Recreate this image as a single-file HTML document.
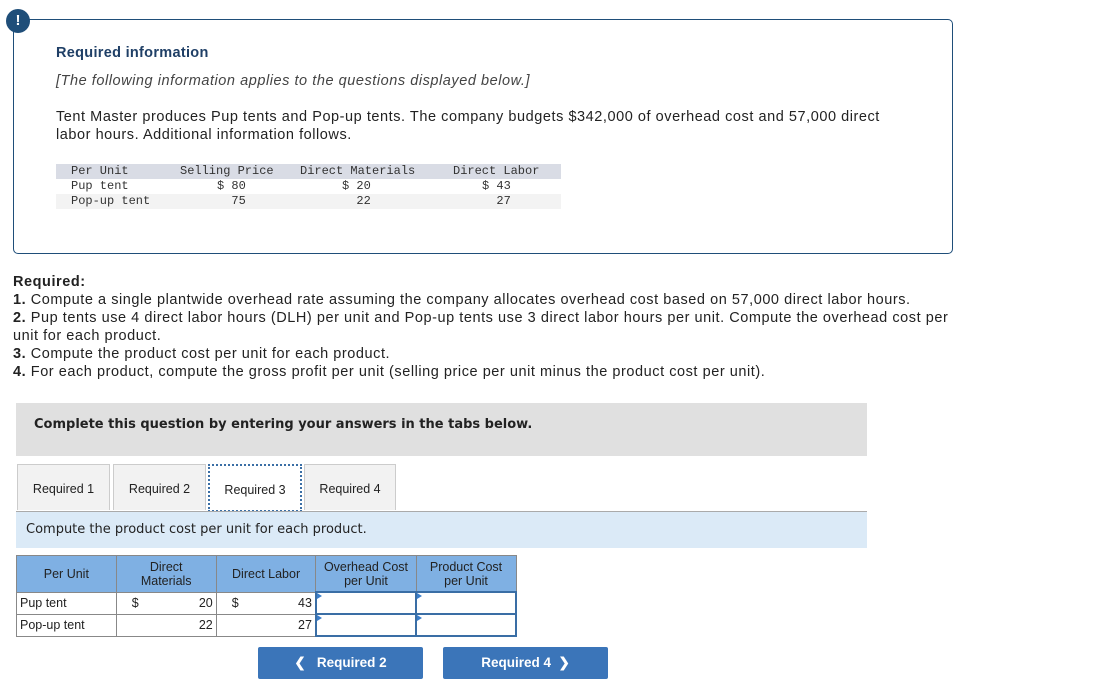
<!DOCTYPE html>
<html><head><meta charset="utf-8"><style>
body{margin:0;width:1094px;height:685px;background:#fff;position:relative;font-family:"Liberation Sans",sans-serif;color:#222;overflow:hidden}
.a{position:absolute}
.box{left:13px;top:19px;width:938px;height:233px;border:1px solid #1f4e79;border-radius:5px}
.ic{left:6px;top:9px;width:24px;height:24px;border-radius:50%;background:#1f4e79;color:#fff;font-weight:bold;font-size:15px;text-align:center;line-height:24px}
.mono{font-family:"Liberation Mono",monospace;font-size:12px;color:#333}
.t{font-size:14.5px;line-height:18px;color:#222;letter-spacing:0.55px}
.tab{top:464px;height:46px;border:1px solid #ccc;border-bottom:none;background:#f2f2f2;font-size:12.5px;text-align:center;line-height:48px;box-sizing:border-box}
table{border-collapse:collapse;font-size:12.5px}
td{border:1px solid #888;padding:0 3px;height:22px;box-sizing:border-box}
th{border:1px solid #888;background:#7fb0e3;font-weight:normal;height:35px;line-height:14px;padding:0}
.in{border:2px solid #3a6ea5;position:relative;padding:0}
.in:before{content:"";position:absolute;left:0;top:0;border-left:5px solid #3a7dc9;border-top:3px solid transparent;border-bottom:3px solid transparent}
.btn{top:647px;height:32px;width:165px;background:#3b75b9;color:#fff;font-weight:bold;font-size:13.5px;text-align:center;line-height:32px;border-radius:2px}
</style></head><body>
<div class="a box"></div>
<div class="a ic">!</div>
<div class="a" style="left:56px;top:45px;font-size:14.5px;font-weight:bold;color:#1f3f66;letter-spacing:0.3px">Required information</div>
<div class="a t" style="left:56px;top:72px;font-style:italic;color:#444">[The following information applies to the questions displayed below.]</div>
<div class="a t" style="left:56px;top:108px;width:850px">Tent Master produces Pup tents and Pop-up tents. The company budgets $342,000 of overhead cost and 57,000 direct labor hours. Additional information follows.</div>
<div class="a" style="left:56px;top:164px;width:505px;height:15px;background:#d9dce5"></div>
<div class="a" style="left:56px;top:194px;width:505px;height:15px;background:#f3f3f3"></div>
<div class="a mono" style="left:71px;top:164px;line-height:15px">Per Unit<br>Pup tent<br>Pop-up tent</div>
<div class="a mono" style="left:180px;top:164px;line-height:15px">Selling Price</div>
<div class="a mono" style="left:217px;top:179px;line-height:15px">$ 80<br>&nbsp;&nbsp;75</div>
<div class="a mono" style="left:300px;top:164px;line-height:15px">Direct Materials</div>
<div class="a mono" style="left:342px;top:179px;line-height:15px">$ 20<br>&nbsp;&nbsp;22</div>
<div class="a mono" style="left:453px;top:164px;line-height:15px">Direct Labor</div>
<div class="a mono" style="left:482px;top:179px;line-height:15px">$ 43<br>&nbsp;&nbsp;27</div>
<div class="a t" style="left:13px;top:273px;width:945px"><b>Required:</b><br><b>1.</b> Compute a single plantwide overhead rate assuming the company allocates overhead cost based on 57,000 direct labor hours.<br><b>2.</b> Pup tents use 4 direct labor hours (DLH) per unit and Pop-up tents use 3 direct labor hours per unit. Compute the overhead cost per unit for each product.<br><b>3.</b> Compute the product cost per unit for each product.<br><b>4.</b> For each product, compute the gross profit per unit (selling price per unit minus the product cost per unit).</div>
<div class="a" style="left:16px;top:403px;width:851px;height:53px;background:#e0e0e0"></div>
<div class="a" style="left:34px;top:417px;font-weight:bold;font-family:'DejaVu Sans',sans-serif;font-size:13px">Complete this question by entering your answers in the tabs below.</div>
<div class="a tab" style="left:17px;width:93px">Required 1</div>
<div class="a tab" style="left:113px;width:93px">Required 2</div>
<div class="a tab" style="left:208px;width:94px;background:#fff;border:2px dotted #3a6ea5;height:48px">Required 3</div>
<div class="a tab" style="left:304px;width:92px">Required 4</div>
<div class="a" style="left:16px;top:511px;width:851px;height:1px;background:#aaa"></div>
<div class="a" style="left:16px;top:512px;width:851px;height:36px;background:#dbeaf7"></div>
<div class="a" style="left:26px;top:522px;font-family:'DejaVu Sans',sans-serif;font-size:13px">Compute the product cost per unit for each product.</div>
<table class="a" style="left:16px;top:555px;width:501px">
<tr><th style="width:100px">Per Unit</th><th style="width:100px">Direct<br>Materials</th><th style="width:100px">Direct Labor</th><th style="width:100px">Overhead Cost<br>per Unit</th><th style="width:100px">Product Cost<br>per Unit</th></tr>
<tr><td>Pup tent</td><td><span style="float:left;padding-left:12px">$</span><span style="float:right">20</span></td><td><span style="float:left;padding-left:12px">$</span><span style="float:right">43</span></td><td class="in"></td><td class="in"></td></tr>
<tr><td>Pop-up tent</td><td style="text-align:right">22</td><td style="text-align:right">27</td><td class="in"></td><td class="in"></td></tr>
</table>
<div class="a btn" style="left:258px">&#10094;&nbsp;&nbsp; Required 2</div>
<div class="a btn" style="left:443px">Required 4 &nbsp;&#10095;</div>
</body></html>
